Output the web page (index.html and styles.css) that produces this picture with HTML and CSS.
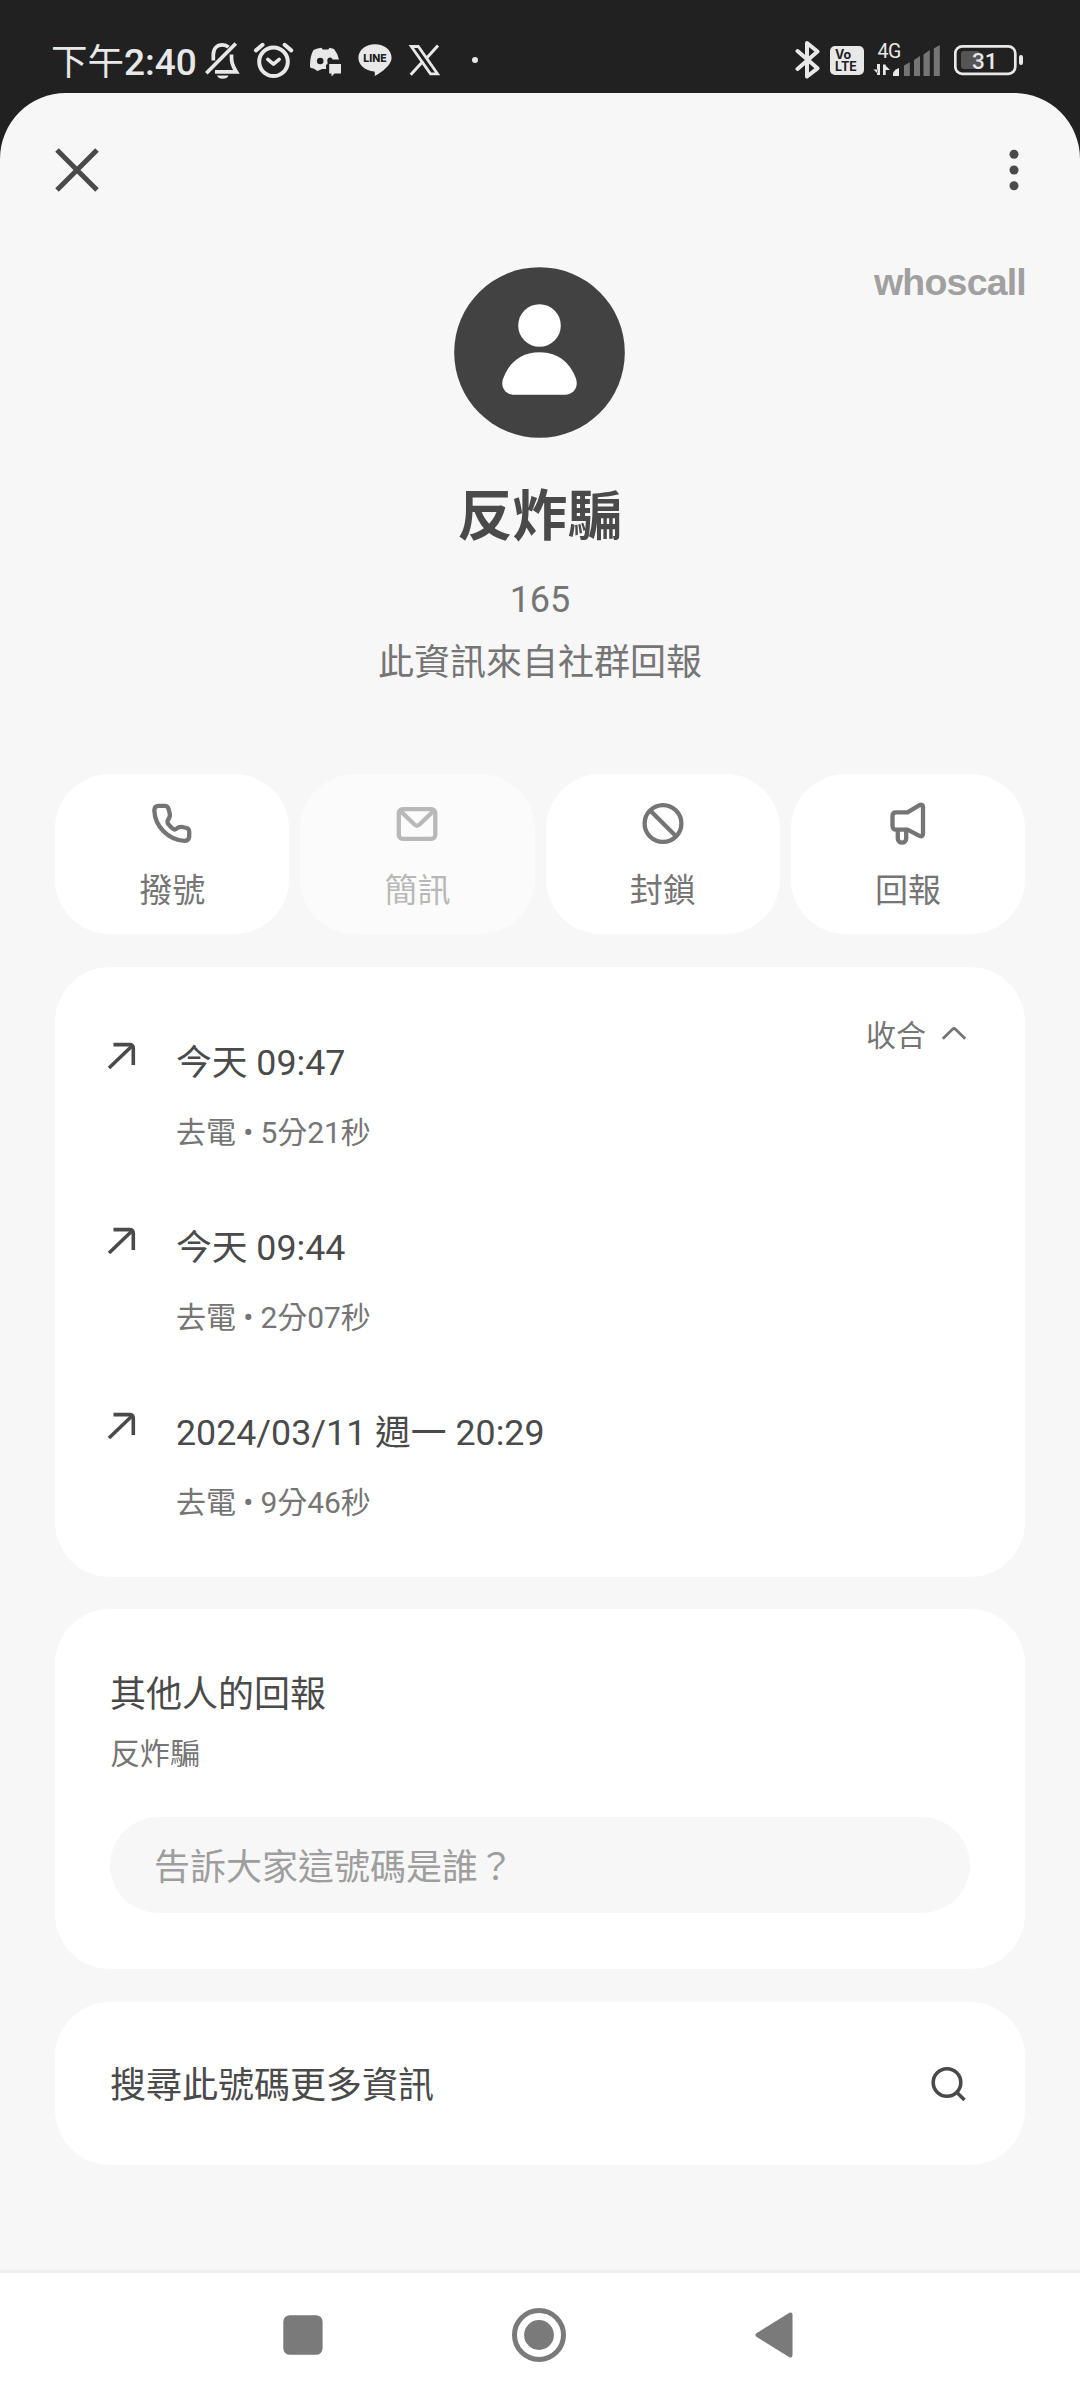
FILE: index.html
```html
<!DOCTYPE html>
<html lang="zh-Hant">
<head>
<meta charset="utf-8">
<title>反炸騙</title>
<link rel="stylesheet" href="styles.css">
</head>
<body>
<div class="screen">
  <header class="status">
    <span class="clock"><span class="period">下午</span>2:40</span>
    <div class="status-left">
      <svg class="s-icon" viewBox="0 0 50 50" fill="none" stroke="#e8e8e8" stroke-width="3.7">
        <path d="M30.500 11.200C28.500 9.300 27 8.800 24.500 8.800C18.500 8.800 15.300 13 15.300 19V24.500"/>
        <path d="M33.500 18.500C33.300 25 33.800 29 38.300 35.800H17"/>
        <path d="M8.300 37.200L37.800 7.500"/>
        <path d="M19 39.500H30.500A6 4.500 0 0 1 19 39.500Z" fill="#e8e8e8" stroke="none"/>
      </svg>
      <svg class="s-icon" viewBox="0 0 50 50" fill="none" stroke="#e8e8e8">
        <circle cx="25.500" cy="25.700" r="14.300" stroke-width="4"/>
        <path d="M19.800 23.300l5.700 4.800 5.700-4.800" stroke-width="3.500" stroke-linecap="round" stroke-linejoin="round"/>
        <path d="M8 14.400l6.600-5.600M43.200 14.400l-6.600-5.600" stroke-width="4" stroke-linecap="round"/>
      </svg>
      <svg class="s-icon" viewBox="0 0 50 50" fill="#e8e8e8">
        <path d="M19.500 12.500l4-.8 1.200 1.800h5.500l1.500-1.800 4.300 1.400q4 5 5 10.400H29.500v4.500l-1.500 1 .1 4h-4l-4.600 2-4-2.500q-3.800-.5-3.500-2.500 0-10.500 3.500-16z"/>
        <circle cx="22.200" cy="25" r="3.300" fill="#212121"/>
        <circle cx="32" cy="24" r="2.500" fill="#212121"/>
        <path d="M31.200 28H43v9.600h-6.500l-3 2.800v-2.800h-2.300z"/>
      </svg>
      <svg class="s-icon" viewBox="0 0 50 50">
        <path fill="#e8e8e8" d="M27 8.200c9.200 0 16.600 5.800 16.600 13.500 0 7.200-9.500 14.300-17 18.300q.8-3.300-.3-4.500C17 34.500 10.400 29 10.400 21.700 10.400 14 17.800 8.200 27 8.200z"/>
        <text x="27" y="26.200" text-anchor="middle" class="line-word">LINE</text>
      </svg>
      <svg class="s-icon" viewBox="0 0 50 50" fill="none" stroke="#e8e8e8">
        <path d="M13.300 10.500h7l19.200 27.300h-7z" stroke-width="2.800"/>
        <path d="M40 9.500L28 22.700M12.700 38.800L25 25.300" stroke-width="3"/>
      </svg>
      <svg class="s-icon" viewBox="0 0 50 50"><circle cx="27" cy="24" r="3" fill="#e8e8e8"/></svg>
    </div>
    <div class="status-right">
      <svg width="26" height="40" viewBox="0 0 26 40" fill="none" stroke="#e8e8e8" stroke-width="4" stroke-linejoin="round" stroke-linecap="round">
        <path d="M2.500 11L22.500 28.300 12 36.500V3l10.500 8.500L2.500 29"/>
      </svg>
      <div class="volte"><span>Vo</span><span>LTE</span></div>
      <svg width="70" height="40" viewBox="0 0 70 40">
        <text x="5.500" y="18.300" class="net">4G</text>
        <path fill="#e8e8e8" d="M5 24v11H8V24zM1.500 29.500h4v4zM11 24.500h2.700v10.500H11zM13 25l5 5h-5z"/>
        <path fill="#e8e8e8" d="M21 36v-2q0-3.500 6-6v8z"/>
        <g fill="#757575">
          <path d="M32 36V25.500l5.800-3.200V36z"/>
          <path d="M42 36V20l6-4v20z"/>
          <path d="M51.500 36V14.500l6.300-4.500v26z"/>
          <path d="M61.800 36V8.500l6-3.500v31z"/>
        </g>
      </svg>
      <svg class="battery" width="70" height="32" viewBox="0 0 70 32">
        <rect x="1.300" y="2.300" width="60" height="27.500" rx="7" fill="none" stroke="#e8e8e8" stroke-width="2.700"/>
        <rect x="7" y="7" width="19" height="18" rx="3" fill="#555"/>
        <rect x="65" y="11" width="4" height="10" rx="2" fill="#e8e8e8"/>
        <text x="30.800" y="24.500" text-anchor="middle" class="level">31</text>
      </svg>
    </div>
  </header>

  <main class="sheet">
    <div class="toolbar">
      <svg width="44" height="44" viewBox="0 0 44 44" stroke="#4a4a4a" stroke-width="5"><path d="M2 2l40 40M42 2L2 42"/></svg>
      <svg width="22" height="44" viewBox="0 0 22 44" fill="#4a4a4a"><circle cx="11" cy="6.300" r="4.500"/><circle cx="11" cy="22" r="4.500"/><circle cx="11" cy="37.700" r="4.500"/></svg>
    </div>

    <section class="profile">
      <span class="brand">whoscall</span>
      <svg class="avatar" viewBox="0 0 171 171">
        <circle cx="85.500" cy="85.500" r="85.300" fill="#424242"/>
        <circle cx="85.500" cy="58.500" r="21.300" fill="#fff"/>
        <path fill="#fff" d="M85.500 85.300C105 85.300 117 97 122.200 112.500 124.500 121 119 127.800 111 127.800H60C52 127.800 46.500 121 48.800 112.500 54 97 66 85.300 85.500 85.300z"/>
      </svg>
      <h1 class="name">反炸騙</h1>
      <p class="number">165</p>
      <p class="source">此資訊來自社群回報</p>
    </section>

    <nav class="actions">
      <div class="action">
        <svg class="a-icon" viewBox="0 0 50 50"><path d="M11.500 6.800Q7.300 6.800 7.300 11.300C8 27.300 21 40.800 37.500 41.800Q41.500 41.800 42.200 37.800V32.600Q42.200 29.800 39.500 29L35.500 28Q32.500 27.300 30.500 29C27.500 31.800 26.500 30.300 23.500 27.600 20.500 24.300 19.500 23.300 21 20.800Q23.500 17.800 22.800 14.800L21.500 9.800Q20.700 6.800 17.500 6.800Z"/></svg>
        <span>撥號</span>
      </div>
      <div class="action disabled">
        <svg class="a-icon" viewBox="0 0 50 50"><rect x="6.800" y="10.200" width="36.500" height="29.600" rx="4"/><path d="M8 11.500l14.500 14q2.500 2.300 5 0L42 11.500"/></svg>
        <span>簡訊</span>
      </div>
      <div class="action">
        <svg class="a-icon" viewBox="0 0 50 50"><circle cx="25" cy="24.500" r="18.400"/><path d="M12.200 11.500L38 37.300"/></svg>
        <span>封鎖</span>
      </div>
      <div class="action">
        <svg class="a-icon" viewBox="0 0 50 50"><path d="M13 13.300H24.500L36.500 6.200Q40 4.700 40 8V35Q40 38.300 36.500 36.800L24.500 30.700H13Q9.500 30.700 9.500 27V17Q9.500 13.300 13 13.300Z"/><path d="M14.800 31v8.500a4.200 4.200 0 0 0 8.400 0V31"/></svg>
        <span>回報</span>
      </div>
    </nav>

    <section class="card history">
      <ul class="calls">
        <li class="call">
          <svg class="out" viewBox="0 0 30 30"><path d="M2 27L26 4"/><path d="M6.500 3.600H22.500Q26.300 3.600 26.300 7.400V24"/></svg>
          <div><p class="when">今天 09:47</p><p class="detail">去電 • 5分21秒</p></div>
        </li>
        <li class="call">
          <svg class="out" viewBox="0 0 30 30"><path d="M2 27L26 4"/><path d="M6.500 3.600H22.500Q26.300 3.600 26.300 7.400V24"/></svg>
          <div><p class="when">今天 09:44</p><p class="detail">去電 • 2分07秒</p></div>
        </li>
        <li class="call">
          <svg class="out" viewBox="0 0 30 30"><path d="M2 27L26 4"/><path d="M6.500 3.600H22.500Q26.300 3.600 26.300 7.400V24"/></svg>
          <div><p class="when">2024/03/11 週一 20:29</p><p class="detail">去電 • 9分46秒</p></div>
        </li>
      </ul>
      <div class="collapse">
        <span>收合</span>
        <svg width="26" height="16" viewBox="0 0 26 16" fill="none" stroke="#757575" stroke-width="2.800"><path d="M1.800 13.800L11.500 4.200q1.500-1.300 3 0l9.700 9.600"/></svg>
      </div>
    </section>

    <section class="card reports">
      <h2 class="report-title">其他人的回報</h2>
      <p class="report-name">反炸騙</p>
      <div class="field">告訴大家這號碼是誰？</div>
    </section>

    <section class="card search">
      <span>搜尋此號碼更多資訊</span>
      <svg width="36" height="36" viewBox="0 0 36 36" fill="none" stroke="#4a4a4a" stroke-width="3.600"><circle cx="16" cy="16.500" r="13.800"/><path d="M26 26.500l7.500 7.500"/></svg>
    </section>
  </main>

  <footer class="navbar">
    <svg width="56" height="56" viewBox="0 0 56 56" fill="#7a7a7a"><rect x="8.300" y="8.200" width="39.300" height="39.600" rx="6.500"/></svg>
    <svg width="56" height="56" viewBox="0 0 56 56"><circle cx="28" cy="28" r="24.500" fill="none" stroke="#7a7a7a" stroke-width="5"/><circle cx="28" cy="28" r="14.900" fill="#7a7a7a"/></svg>
    <svg width="56" height="56" viewBox="0 0 56 56" fill="#7a7a7a" stroke="#7a7a7a" stroke-width="4" stroke-linejoin="round"><path d="M10.500 28L43.500 7.500V48.500Z"/></svg>
  </footer>
</div>
</body>
</html>
```
FILE: styles.css
```css
* { box-sizing: border-box; margin: 0; padding: 0; }
body {
  font-family: Roboto, "Noto Sans CJK TC", sans-serif;
  background: #212121;
  color: #4a4a4a;
}
svg { display: block; flex: none; }
.screen {
  width: 1080px;
  height: 2400px;
  display: flex;
  flex-direction: column;
  background: #212121;
}

/* status bar */
.status {
  height: 93px;
  padding: 36px 56px 0 51px;
  display: flex;
  align-items: flex-start;
  color: #e8e8e8;
}
.clock {
  width: 147px;
  font-size: 37px;
  font-weight: 500;
  line-height: 53px;
  white-space: nowrap;
}
.period { font-weight: 400; font-size: 36.500px; }
.status-left { display: flex; }
.s-icon { width: 50px; height: 50px; }
.line-word { font: 800 10.500px Inter, sans-serif; fill: #212121; }
.status-right {
  margin-left: auto;
  padding-top: 4px;
  display: flex;
  align-items: flex-start;
}
.volte {
  width: 34px;
  height: 29px;
  margin: 6px 8px 0 9px;
  padding: 3px 0 0 5px;
  display: flex;
  flex-direction: column;
  border-radius: 5px;
  background: #e8e8e8;
  color: #212121;
  font: 700 12.500px/12px Inter, sans-serif;
}
.net { font: 400 19.500px Roboto, sans-serif; fill: #e8e8e8; letter-spacing: -.5px; }
.battery { margin: 4px 0 0 12px; }
.level { font: 500 22.500px Roboto, sans-serif; fill: #e8e8e8; }

/* sheet */
.sheet {
  flex: 1;
  padding: 0 55px;
  border-radius: 66px 66px 0 0;
  background: #f7f7f7;
}
.toolbar {
  height: 155px;
  padding: 55px 0 0;
  display: flex;
  justify-content: space-between;
}
.profile {
  position: relative;
  height: 526px;
  padding-top: 19px;
  display: flex;
  flex-direction: column;
  align-items: center;
}
.brand {
  position: absolute;
  top: 12px;
  right: -1px;
  font: 700 37.500px/44px "Liberation Sans", sans-serif;
  letter-spacing: -.8px;
  color: #a0a0a0;
}
.avatar { width: 171px; height: 171px; margin-right: 1px; }
.name { margin-top: 43px; font-size: 55px; line-height: 70px; font-weight: 700; }
.number { margin-top: 24px; font-size: 36px; line-height: 50px; color: #757575; }
.source { margin-top: 13px; font-size: 36px; line-height: 50px; color: #757575; }

.actions { display: grid; grid-template-columns: repeat(4, 1fr); gap: 11px; }
.action {
  height: 160px;
  padding-top: 25px;
  display: flex;
  flex-direction: column;
  align-items: center;
  gap: 20px;
  border-radius: 55px;
  background: #fff;
  color: #757575;
  font-size: 33px;
  line-height: 44px;
}
.action.disabled { background: #fbfbfb; color: #b8b8b8; }
.a-icon {
  width: 50px;
  height: 50px;
  fill: none;
  stroke: currentColor;
  stroke-width: 4.300;
  stroke-linejoin: round;
}

.card { margin-top: 33px; border-radius: 55px; background: #fff; }
.history {
  height: 610px;
  padding: 48px 58px 0 52px;
  display: flex;
  justify-content: space-between;
  align-items: flex-start;
}
.calls { list-style: none; padding-top: 23px; }
.call { height: 185px; display: flex; gap: 39px; }
.out { width: 30px; height: 30px; margin-top: 3px; fill: none; stroke: #4a4a4a; stroke-width: 3.600; }
.when { font-size: 35.750px; line-height: 50px; white-space: nowrap; }
.detail { margin-top: 24px; font-size: 30px; line-height: 42px; letter-spacing: -.1px; color: #757575; }
.collapse {
  display: flex;
  align-items: center;
  gap: 15px;
  font-size: 30px;
  line-height: 42px;
  color: #757575;
}
.collapse svg { margin-top: -7px; }

.reports { height: 360px; margin-top: 32px; padding: 61px 55px 0; }
.report-title { font-size: 36px; line-height: 50px; font-weight: 400; }
.report-name { margin-top: 13px; font-size: 30px; line-height: 42px; color: #757575; }
.field {
  height: 96px;
  margin-top: 42px;
  padding-left: 44px;
  border-radius: 48px;
  background: #f7f7f7;
  color: #9e9e9e;
  font-size: 36px;
  line-height: 103px;
}
.search {
  height: 163px;
  padding: 0 58px 0 55px;
  display: flex;
  align-items: center;
  justify-content: space-between;
  font-size: 36px;
  line-height: 50px;
}
.search span { padding-top: 5px; }

.navbar {
  height: 130px;
  padding: 0 277px 3px 275px;
  display: flex;
  align-items: center;
  justify-content: space-between;
  border-top: 3px solid #eee;
  background: #fff;
}
```
